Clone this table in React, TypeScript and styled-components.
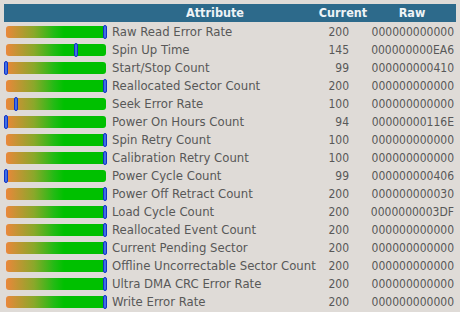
import * as React from 'react'
import styled, { createGlobalStyle } from 'styled-components'

const GlobalStyle = createGlobalStyle`
  html, body {
    margin: 0;
    padding: 0;
    background: #dfdbd7;
  }
`

const Wrapper = styled.div`
  width: 460px;
  height: 312px;
  padding: 4px 4px 0 4px;
  box-sizing: border-box;
  overflow: hidden;
  font-family: "DejaVu Sans Condensed", "DejaVu Sans", sans-serif;
  font-size: 12px;
  color: #585858;
`

const Table = styled.div`
  display: grid;
  grid-template-columns: 108px 206px 50px 88px;
  grid-template-rows: 19px;
  grid-auto-rows: 18px;
`

const HeaderCell = styled.div<{ $align?: string }>`
  background: #2d6a8b;
  color: #eef3f6;
  font-weight: bold;
  font-size: 12.5px;
  line-height: 18px;
  height: 18px;
  text-align: ${(p) => p.$align || 'center'};
  white-space: nowrap;
`

const BarCell = styled.div`
  display: flex;
  align-items: center;
  padding-left: 2px;
`

const Bar = styled.div`
  position: relative;
  width: 100px;
  height: 12px;
  border-radius: 3px;
  background: linear-gradient(to right, #ea873b 0%, #8aa82a 28%, #22bb14 48%, #00c000 58%, #00c000 100%);
`

const Marker = styled.div`
  position: absolute;
  top: -1px;
  width: 2px;
  height: 12px;
  border: 1px solid #1233c8;
  border-radius: 2px;
  background: #3f6fe4;
`

const Name = styled.div`
  font-size: 13px;
  line-height: 18px;
  white-space: nowrap;
`

const Num = styled.div<{ $pad: number }>`
  line-height: 18px;
  text-align: right;
  padding-right: ${(p) => p.$pad}px;
  white-space: nowrap;
`

type Attr = { name: string; current: number; raw: string; mark: number }

const attrs: Attr[] = [
  { name: 'Raw Read Error Rate', current: 200, raw: '000000000000', mark: 97 },
  { name: 'Spin Up Time', current: 145, raw: '000000000EA6', mark: 68 },
  { name: 'Start/Stop Count', current: 99, raw: '000000000410', mark: -2 },
  { name: 'Reallocated Sector Count', current: 200, raw: '000000000000', mark: 97 },
  { name: 'Seek Error Rate', current: 100, raw: '000000000000', mark: 8 },
  { name: 'Power On Hours Count', current: 94, raw: '00000000116E', mark: -2 },
  { name: 'Spin Retry Count', current: 100, raw: '000000000000', mark: 97 },
  { name: 'Calibration Retry Count', current: 100, raw: '000000000000', mark: 97 },
  { name: 'Power Cycle Count', current: 99, raw: '000000000406', mark: -2 },
  { name: 'Power Off Retract Count', current: 200, raw: '000000000030', mark: 97 },
  { name: 'Load Cycle Count', current: 200, raw: '0000000003DF', mark: 97 },
  { name: 'Reallocated Event Count', current: 200, raw: '000000000000', mark: 97 },
  { name: 'Current Pending Sector', current: 200, raw: '000000000000', mark: 97 },
  { name: 'Offline Uncorrectable Sector Count', current: 200, raw: '000000000000', mark: 97 },
  { name: 'Ultra DMA CRC Error Rate', current: 200, raw: '000000000000', mark: 97 },
  { name: 'Write Error Rate', current: 200, raw: '000000000000', mark: 97 },
]

export default function App() {
  return (
    <Wrapper>
      <GlobalStyle />
      <Table>
        <HeaderCell />
        <HeaderCell>Attribute</HeaderCell>
        <HeaderCell>Current</HeaderCell>
        <HeaderCell>Raw</HeaderCell>
        {attrs.map((a) => (
          <React.Fragment key={a.name}>
            <BarCell>
              <Bar>
                <Marker style={{ left: a.mark }} />
              </Bar>
            </BarCell>
            <Name>{a.name}</Name>
            <Num $pad={19}>{a.current}</Num>
            <Num $pad={2}>{a.raw}</Num>
          </React.Fragment>
        ))}
      </Table>
    </Wrapper>
  )
}
